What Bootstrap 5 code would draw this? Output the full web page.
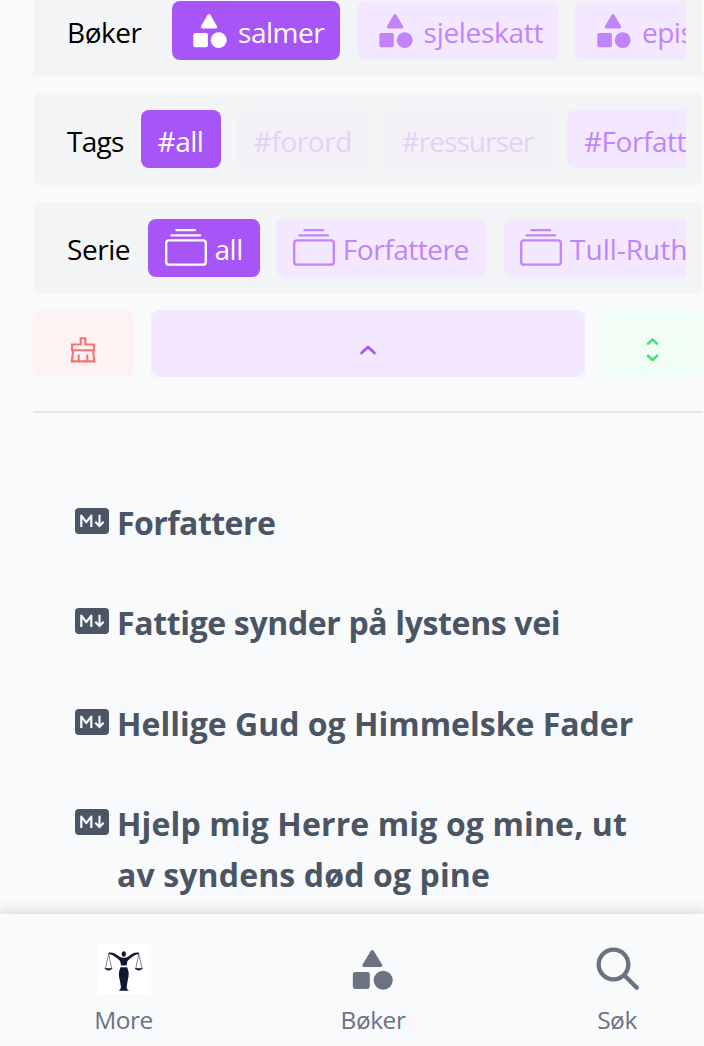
<!DOCTYPE html>
<html lang="no">
<head>
<meta charset="utf-8">
<meta name="viewport" content="width=device-width, initial-scale=1">
<title>Salmer</title>
<link href="https://cdn.jsdelivr.net/npm/bootstrap@5.3.0/dist/css/bootstrap.min.css" rel="stylesheet">
<style>
html,body{height:100%;overflow:hidden}
body{background:#f9fafc;font-family:"Open Sans","Noto Sans",sans-serif;font-size:28px;line-height:42px;letter-spacing:-.45px;color:#000}
.app{height:1046px}
.filters{padding:0 1px 0 33px;gap:16.8px}
.panel{background:#f3f4f6;border-radius:8px;height:92px;padding:17px 17px 16.5px 34px}
.panel.first{height:76px;padding-top:1px;border-radius:0}
.panel-label{flex:none;white-space:nowrap;padding-top:10px}
.strip{gap:16.8px;min-width:0}
.chip{flex:none;height:58.5px;border-radius:8px;background:#f3e8ff;color:#c084fc;padding:3px 0 0 16.5px;white-space:nowrap;display:flex;align-items:center}
.chip.on{background:#a855f7;color:#fff}
.chip.dim{opacity:.3}
.shapes{width:50px;height:50px;margin:5px 4px 0 -4px;flex:none}
.stack{width:42px;height:42px;margin:-9px 8px 0 0;flex:none}
.act{height:67px;border-radius:8px}
.act svg{margin-top:12px}
.clean{width:100.5px;background:#fef2f2;color:#f87171}
.fold{background:#f3e8ff;color:#a855f7}
.sort{width:101px;background:#f0fdf4;color:#4ade80}
.rule{height:2px;background:#e5e7eb;margin:33.2px 1px 0 33px}
.docs{padding:85px 60px 0 75px;gap:50.4px;font-size:32px;line-height:50.2px;font-weight:700;color:#4b5563;letter-spacing:0}
.md{width:34px;height:26px;flex:none;margin:10px 8px 0 0}
.tabbar{height:132.5px;background:#f9fafc;box-shadow:0 0 16px rgba(0,0,0,.19);color:#6b7280;font-size:24.5px;line-height:34px;padding-top:30.5px;z-index:2}
.tabbar .tab-item{width:248px;flex:none}
.tabbar .tab-item:first-child{width:247px}
.tabbar .tab-item.last{width:174px}
.tab-pic{width:51px;height:51px}
.ls-9{letter-spacing:-.95px}.ls-7{letter-spacing:-.7px}.ls-5{letter-spacing:-.55px}.ls-4{letter-spacing:-.36px}.ls-3{letter-spacing:-.3px}.ls-0{letter-spacing:0}.ls-w{letter-spacing:.13px}
</style>
</head>
<body>
<svg class="d-none">
 <symbol id="shapes" viewBox="0 0 50 50"><path d="M23.4 6.2q1.6-2.3 3.2 0l6.3 10.9q.9 2.2-1.5 2.4H18.6q-2.4-.2-1.5-2.4z"/><rect x="9.300" y="24" width="14.600" height="14.300" rx="1.8"/><circle cx="34.7" cy="31.2" r="7.900"/></symbol>
 <symbol id="stack" viewBox="0 0 42 42"><g fill="none" stroke="currentColor" stroke-width="2.3" stroke-linecap="round"><path d="M11.5 6.200h18.500M6.500 11.400h28.500"/><rect x="1.2" y="16.300" width="39.6" height="24.400" rx="2.8"/></g></symbol>
 <symbol id="md" viewBox="0 0 34 26"><rect width="34" height="26" rx="4" fill="#4b5563"/><path d="M6.300 19V7.600l5 6.600 5-6.600V19" fill="none" stroke="#f9fafc" stroke-width="2.200" stroke-linejoin="round"/><path d="M24.500 6.700v11.300m-4.200-4.300 4.200 4.300 4.200-4.300" fill="none" stroke="#f9fafc" stroke-width="2.100"/></symbol>
</svg>
<div class="app d-flex flex-column">
 <section class="filters d-flex flex-column">
  <div class="panel first d-flex">
   <div class="panel-label" style="width:104.500px">Bøker</div>
   <div class="strip d-flex flex-grow-1 overflow-hidden">
    <div class="chip on" style="width:168.800px"><svg class="shapes" fill="currentColor"><use href="#shapes"/></svg><span>salmer</span></div>
    <div class="chip" style="width:201.500px"><svg class="shapes" fill="currentColor"><use href="#shapes"/></svg><span class="ls-3">sjeleskatt</span></div>
    <div class="chip" style="width:180px"><svg class="shapes" fill="currentColor"><use href="#shapes"/></svg><span>epistler</span></div>
   </div>
  </div>
  <div class="panel d-flex">
   <div class="panel-label ls-7" style="width:74px">Tags</div>
   <div class="strip d-flex flex-grow-1 overflow-hidden">
    <div class="chip on" style="width:79.500px">#all</div>
    <div class="chip dim" style="width:131px">#forord</div>
    <div class="chip dim ls-9" style="width:165.500px">#ressurser</div>
    <div class="chip" style="width:180px">#Forfattere</div>
   </div>
  </div>
  <div class="panel d-flex">
   <div class="panel-label" style="width:81px;padding-top:9px">Serie</div>
   <div class="strip d-flex flex-grow-1 overflow-hidden">
    <div class="chip on" style="width:111.500px"><svg class="stack"><use href="#stack"/></svg><span>all</span></div>
    <div class="chip" style="width:210.500px"><svg class="stack"><use href="#stack"/></svg><span>Forfattere</span></div>
    <div class="chip" style="width:230px"><svg class="stack"><use href="#stack"/></svg><span class="ls-0">Tull-Ruth</span></div>
   </div>
  </div>
  <div class="d-flex" style="gap:17px">
   <div class="act clean d-flex align-items-center justify-content-center"><svg width="28" height="28" viewBox="0 0 28 28" fill="none" stroke="currentColor" stroke-width="2.1"><path d="M11.7 8.5V2.2h4.7v6.3h8.7v5.8H3V8.5zM4.2 14.3 2.8 25.4h22.6L24 14.3M9.7 25v-6.600M18.300 25v-6.600"/></svg></div>
   <div class="act fold flex-grow-1 d-flex align-items-center justify-content-center"><svg width="20" height="12" viewBox="0 0 20 12" fill="none" stroke="currentColor" stroke-width="2.6" stroke-linecap="round" stroke-linejoin="round"><path d="m3.500 9 6.500-6 6.500 6"/></svg></div>
   <div class="act sort d-flex align-items-center justify-content-center"><svg width="16" height="28" viewBox="0 0 16 28" fill="none" stroke="currentColor" stroke-width="2.6" stroke-linecap="round" stroke-linejoin="round"><path d="M3 7.700 7.600 3.400l4.600 4.300M3 19.700 7.600 24l4.600-4.300"/></svg></div>
  </div>
 </section>
 <div class="rule"></div>
 <main class="docs d-flex flex-column flex-grow-1 overflow-hidden">
  <div class="d-flex"><svg class="md"><use href="#md"/></svg><span class="ls-5">Forfattere</span></div>
  <div class="d-flex"><svg class="md"><use href="#md"/></svg><span class="ls-4">Fattige synder på lystens vei</span></div>
  <div class="d-flex"><svg class="md"><use href="#md"/></svg><span class="text-nowrap">Hellige Gud og Himmelske Fader</span></div>
  <div class="d-flex"><svg class="md"><use href="#md"/></svg><span class="text-nowrap ls-w">Hjelp mig Herre mig og mine, ut<br>av syndens død og pine</span></div>
 </main>
 <nav class="tabbar d-flex flex-shrink-0 position-relative">
  <div class="tab-item d-flex flex-column align-items-center">
   <svg class="tab-pic" viewBox="0 0 51 51" fill="#111633"><rect x=".5" width="50" height="50" fill="#fff"/><ellipse cx="25.8" cy="10" rx="2.1" ry="2.8"/><path d="M10.5 8.800c4-1 7.500 1.500 11.500 4.300l2.500.7h2.600l2.500-.7c4-2.800 7-5.300 11.500-4.300v1.300c-4 .2-7.500 3.500-11.600 6.800l-1 4.600h-5.400l-1-4.600c-4.100-3.300-7.600-6.600-11.600-6.800zM22.500 23.200h6.600c2 4.800 2 8 .8 12.300l-1.300 7.500.8 2.500 1.600 1.300H20.600l1.600-1.300.8-2.500-1.300-7.500c-1.200-4.300-1.200-7.500.8-12.300z"/><path d="M10.700 10 7.300 24.500M10.700 10l3 14.500M40.800 10l-3 14.500M40.800 10l3.300 14.500" fill="none" stroke="#4c506a" stroke-width=".7"/><path d="M6.800 24.500h7.400q-3.700 3.300-7.400 0zM37 24.500h7.400q-3.700 3.300-7.400 0z" stroke="#111633" stroke-width=".6"/></svg>
   <span class="mt-2">More</span></div>
  <div class="tab-item d-flex flex-column align-items-center">
   <svg class="tab-pic" viewBox="0 0 51 51" fill="currentColor"><path d="M24.600 7.200q1.700-2.300 3.400 0l8 13.200q1 2.300-1.500 2.500H18.100q-2.500-.2-1.500-2.500z"/><rect x="6.800" y="28" width="17" height="17" rx="2.400"/><circle cx="37.200" cy="36.300" r="9.500"/></svg>
   <span class="mt-2 ps-1">Bøker</span></div>
  <div class="tab-item last ms-auto d-flex flex-column align-items-center">
   <svg class="tab-pic" viewBox="0 0 51 51" fill="none" stroke="currentColor" stroke-width="4.300" stroke-linecap="round"><circle cx="21.500" cy="20.500" r="14.800"/><path d="m32.500 31.500 12.300 12.300"/></svg>
   <span class="mt-2">Søk</span></div>
 </nav>
</div>
<script src="https://cdn.jsdelivr.net/npm/bootstrap@5.3.0/dist/js/bootstrap.bundle.min.js"></script>
</body>
</html>
